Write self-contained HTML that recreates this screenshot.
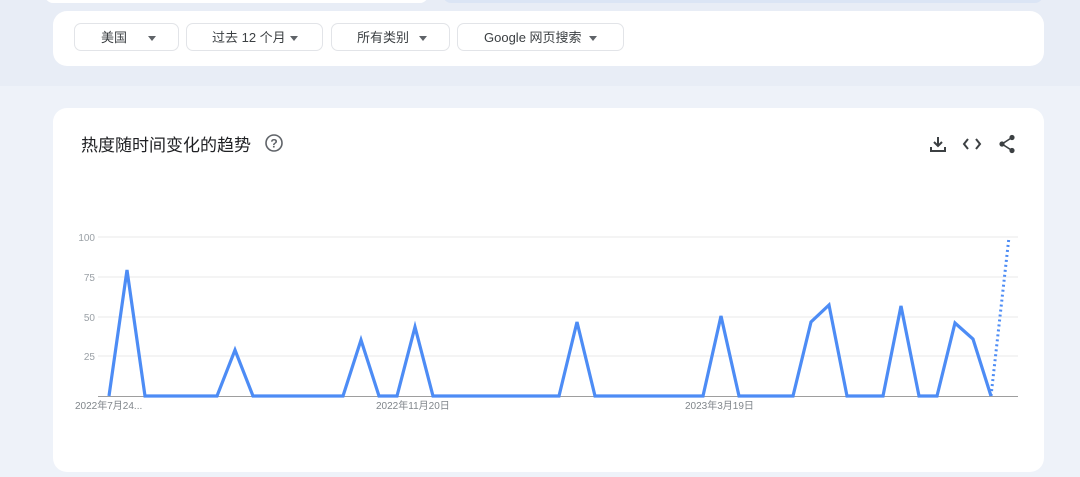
<!DOCTYPE html>
<html><head><meta charset="utf-8"><style>
body{margin:0;width:1080px;height:477px;overflow:hidden;background:#eef2f9;font-family:"Liberation Sans","Noto Sans CJK SC",sans-serif;position:relative}
.top{position:absolute;left:0;top:0;width:1080px;height:86px;background:#e8edf6}
.card{position:absolute;background:#fff;border-radius:14px}
.btn{position:absolute;top:23px;height:28px;border:1px solid #e2e4e8;border-radius:7px;font-size:13px;color:#3c4043;line-height:28px;box-sizing:border-box}
.btn span{position:absolute;top:0}
.btn i{position:absolute;top:12px;width:0;height:0;border-left:4px solid transparent;border-right:4px solid transparent;border-top:5px solid #5f6368}
</style></head><body>
<div class="top"></div>
<div class="card" style="left:45px;top:-20px;width:383px;height:23px;border-radius:8px"></div>
<div class="card" style="left:443px;top:-20px;width:600px;height:23px;border-radius:8px;background:#dbe5f5"></div>
<div class="card" style="left:53px;top:11px;width:991px;height:55px"></div>
<div class="btn" style="left:74px;width:105px"><span style="left:26px">美国</span><i style="left:73px"></i></div>
<div class="btn" style="left:186px;width:137px"><span style="left:25px">过去 12 个月</span><i style="left:103px"></i></div>
<div class="btn" style="left:331px;width:119px"><span style="left:25px">所有类别</span><i style="left:87px"></i></div>
<div class="btn" style="left:457px;width:167px"><span style="left:26px">Google 网页搜索</span><i style="left:131px"></i></div>
<div class="card" style="left:53px;top:108px;width:991px;height:364px"></div>
<div style="position:absolute;left:81px;top:131px;font-size:17px;color:#202124">热度随时间变化的趋势</div>
<svg style="position:absolute;left:264px;top:133px" width="20" height="20" viewBox="0 0 20 20"><circle cx="10" cy="10" r="8" fill="none" stroke="#5f6368" stroke-width="1.6"/><text x="10" y="14.5" font-size="12" text-anchor="middle" fill="#5f6368" font-family="Liberation Sans" font-weight="bold">?</text></svg>
<svg style="position:absolute;left:928px;top:134px" width="90" height="20" viewBox="0 0 90 20">
<g fill="none" stroke="#3c4043" stroke-width="2">
<path d="M10 3v9M6 8l4 4 4-4M3 13v4h14v-4"/>
<path d="M40 5l-4 5 4 5M48 5l4 5-4 5"/>
</g>
<g fill="#3c4043"><circle cx="84" cy="3.5" r="2.6"/><circle cx="74" cy="10" r="2.6"/><circle cx="84" cy="16.5" r="2.6"/></g>
<path d="M84 3.5L74 10 84 16.5" stroke="#3c4043" stroke-width="1.6" fill="none"/>
</svg>
<svg style="position:absolute;left:0;top:0" width="1080" height="477">
<g stroke="#e8e8e8" stroke-width="1"><line x1="98" y1="237" x2="1018" y2="237"/><line x1="98" y1="277" x2="1018" y2="277"/><line x1="98" y1="317" x2="1018" y2="317"/><line x1="98" y1="356" x2="1018" y2="356"/></g>
<line x1="98" y1="396.5" x2="1018" y2="396.5" stroke="#9e9e9e" stroke-width="1"/>
<g font-size="10" fill="#9aa0a6" font-family="Liberation Sans" text-anchor="end"><text x="95" y="241">100</text><text x="95" y="281">75</text><text x="95" y="321">50</text><text x="95" y="360">25</text></g>
<g font-size="10" fill="#80868b" font-family="Liberation Sans,Noto Sans CJK SC"><text x="75" y="409">2022年7月24...</text><text x="376" y="409">2022年11月20日</text><text x="685" y="409">2023年3月19日</text></g>
<polyline fill="none" stroke="#4d8cf5" stroke-width="3.2" stroke-linejoin="miter" points="109,396 127,270 145,396 217,396 235,350 253,396 343,396 361,340 379,396 397,396 415,327 433,396 559,396 577,322 595,396 703,396 721,316 739,396 793,396 811,322 829,305 847,396 883,396 901,306 919,396 937,396 955,323 973,339 991,396"/>
<line x1="991" y1="396" x2="1009" y2="237" stroke="#4d8cf5" stroke-width="3" stroke-dasharray="2,3"/>
</svg>
</body></html>
